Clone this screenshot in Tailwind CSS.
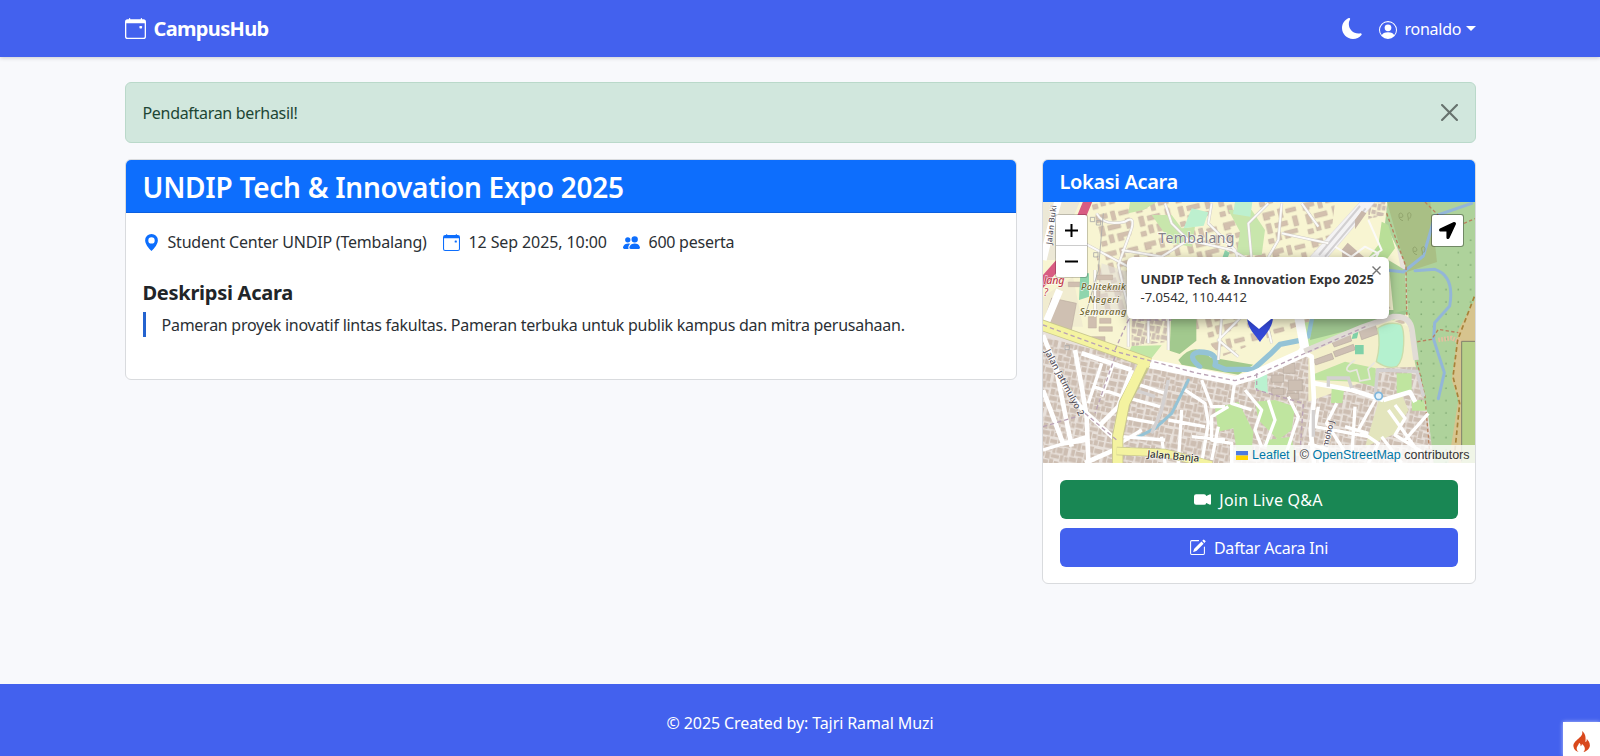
<!DOCTYPE html>
<html lang="id">
<head>
<meta charset="utf-8">
<title>CampusHub</title>
<script src="https://cdn.jsdelivr.net/npm/@tailwindcss/browser@4"></script>
</head>
<body class="flex h-[756px] flex-col overflow-hidden bg-[#f8f9fc] font-['Noto_Sans',sans-serif] text-[16px] leading-[25.5px] tracking-[-0.26px] text-[#2b3035]">

<nav class="h-[57px] shrink-0 bg-[#4361ee] text-white shadow-[0_1px_4px_rgba(0,0,0,0.18)]">
  <div class="mx-auto flex h-full w-[1351px] items-center justify-between">
    <a class="flex items-center gap-[8px]">
      <svg class="h-[21px] w-[21px]" viewBox="0 0 16 16" fill="currentColor"><path d="M11 6.5a.5.5 0 0 1 .5-.5h1a.5.5 0 0 1 .5.5v1a.5.5 0 0 1-.5.5h-1a.5.5 0 0 1-.5-.5z"/><path d="M3.5 0a.5.5 0 0 1 .5.5V1h8V.5a.5.5 0 0 1 1 0V1h1a2 2 0 0 1 2 2v11a2 2 0 0 1-2 2H2a2 2 0 0 1-2-2V3a2 2 0 0 1 2-2h1V.5a.5.5 0 0 1 .5-.5M1 4v10a1 1 0 0 0 1 1h12a1 1 0 0 0 1-1V4z"/></svg>
      <span class="pt-px text-[20px] font-bold tracking-[-0.65px]">CampusHub</span>
    </a>
    <div class="flex items-center">
      <svg class="mr-[16px] h-[21px] w-[21px]" viewBox="0 0 16 16" fill="currentColor"><path d="M6 .278a.77.77 0 0 1 .08.858 7.2 7.2 0 0 0-.878 3.46c0 4.021 3.278 7.277 7.318 7.277q.792-.001 1.533-.16a.79.79 0 0 1 .81.316.73.73 0 0 1-.031.893A8.35 8.35 0 0 1 8.344 16C3.734 16 0 12.286 0 7.71 0 4.266 2.114 1.312 5.124.06A.75.75 0 0 1 6 .278"/></svg>
      <svg class="mr-[8px] mt-[2px] h-[18px] w-[18px]" viewBox="0 0 16 16" fill="currentColor"><path d="M11 6a3 3 0 1 1-6 0 3 3 0 0 1 6 0"/><path fill-rule="evenodd" d="M0 8a8 8 0 1 1 16 0A8 8 0 0 1 0 8m8-7a7 7 0 0 0-5.468 11.37C3.242 11.226 4.805 10 8 10s4.757 1.225 5.468 2.37A7 7 0 0 0 8 1"/></svg>
      <span class="w-[57px] whitespace-nowrap pt-[2px]">ronaldo</span>
      <span class="ml-[4px] border-x-[5px] border-t-[5px] border-x-transparent border-t-white"></span>
    </div>
  </div>
</nav>

<main class="mx-auto flex w-[1351px] flex-1 flex-col pt-[25px]">
  <div class="flex h-[61px] items-center justify-between rounded-[6px] border border-[#bad9ca] bg-[#d1e7dd] px-[17px] text-[#1d4634]">
    <span class="pt-[2px] tracking-[-0.31px]">Pendaftaran berhasil!</span>
    <svg class="h-[17px] w-[17px] opacity-50" viewBox="0 0 16 16" fill="#000"><path d="M.293.293a1 1 0 0 1 1.414 0L8 6.586 14.293.293a1 1 0 1 1 1.414 1.414L9.414 8l6.293 6.293a1 1 0 0 1-1.414 1.414L8 9.414l-6.293 6.293a1 1 0 0 1-1.414-1.414L6.586 8 .293 1.707a1 1 0 0 1 0-1.414"/></svg>
  </div>

  <div class="mt-[16px] flex items-start justify-between">
    <section class="h-[221px] w-[892px] overflow-hidden rounded-[6px] border border-[#d9dbde] bg-white">
      <div class="flex h-[53px] items-center border-b border-[#0b5fe0] bg-[#0d6efd] px-[17px] pt-[3px] text-white">
        <h1 class="text-[28px] font-semibold tracking-[-0.26px]">UNDIP Tech &amp; Innovation Expo 2025</h1>
      </div>
      <div class="px-[17px] pt-[17px]">
        <div class="flex items-center whitespace-nowrap">
          <svg class="mr-[8px] h-[17px] w-[17px] text-[#0d6efd]" viewBox="0 0 16 16" fill="currentColor"><path d="M8 16s6-5.686 6-10A6 6 0 0 0 2 6c0 4.314 6 10 6 10m0-7a3 3 0 1 1 0-6 3 3 0 0 1 0 6"/></svg>
          <span class="w-[275px] tracking-[-0.2px]">Student Center UNDIP (Tembalang)</span>
          <svg class="mr-[9px] h-[17px] w-[17px] text-[#0d6efd]" viewBox="0 0 16 16" fill="currentColor"><path d="M11 6.5a.5.5 0 0 1 .5-.5h1a.5.5 0 0 1 .5.5v1a.5.5 0 0 1-.5.5h-1a.5.5 0 0 1-.5-.5z"/><path d="M3.5 0a.5.5 0 0 1 .5.5V1h8V.5a.5.5 0 0 1 1 0V1h1a2 2 0 0 1 2 2v11a2 2 0 0 1-2 2H2a2 2 0 0 1-2-2V3a2 2 0 0 1 2-2h1V.5a.5.5 0 0 1 .5-.5M1 4v10a1 1 0 0 0 1 1h12a1 1 0 0 0 1-1V4z"/></svg>
          <span class="w-[154px] tracking-[-0.1px]">12 Sep 2025, 10:00</span>
          <svg class="mr-[9px] h-[17px] w-[17px] text-[#0d6efd]" viewBox="0 0 16 16" fill="currentColor"><path d="M7 14s-1 0-1-1 1-4 5-4 5 3 5 4-1 1-1 1zm4-6a3 3 0 1 0 0-6 3 3 0 0 0 0 6m-5.784 6A2.24 2.24 0 0 1 5 13c0-1.355.68-2.75 1.936-3.72A6.3 6.3 0 0 0 5 9c-4 0-5 3-5 4s1 1 1 1zM4.5 8a2.5 2.5 0 1 0 0-5 2.5 2.5 0 0 0 0 5"/></svg>
          <span class="tracking-[-0.25px]">600 peserta</span>
        </div>
        <h2 class="mt-[24px] text-[20px] font-bold tracking-[-0.27px] text-[#212529]">Deskripsi Acara</h2>
        <p class="mt-[7px] h-[25px] border-l-[3px] border-[#2463cf] pl-[16px] pt-px">Pameran proyek inovatif lintas fakultas. Pameran terbuka untuk publik kampus dan mitra perusahaan.</p>
      </div>
    </section>

    <section class="h-[425px] w-[434px] overflow-hidden rounded-[6px] border border-[#d9dbde] bg-white">
      <div class="flex h-[42px] items-center bg-[#0d6efd] px-[17px] pt-[2px] text-white">
        <h2 class="text-[20px] font-semibold tracking-[-0.35px]">Lokasi Acara</h2>
      </div>
      <div class="relative h-[261px] overflow-hidden">
        <svg class="h-full w-full" viewBox="24 156 1296 783" preserveAspectRatio="none" font-family="Noto Sans, sans-serif">
          <defs>
            <pattern id="houses" width="97" height="104" patternUnits="userSpaceOnUse" patternTransform="rotate(12)">
              <path fill="#cdbeb2" d="M2 3h15v16H2zM19 1h10v22H19zM32 5h21v12H32zM56 2h12v20H56zM71 6h23v14H71zM4 23h11v20H4zM18 27h24v13H18zM45 20h9v25h-9zM57 26h18v17H57zM78 24h13v22H78zM1 47h22v14H1zM26 44h14v21H26zM43 49h25v11H43zM71 47h10v20H71zM84 50h11v14H84zM3 65h13v18H3zM19 69h19v12H19zM41 64h12v22H41zM56 68h13v13H56zM72 71h21v12H72zM2 87h24v13H2zM29 85h10v17H29zM42 89h19v12H42zM64 85h12v16H64zM79 87h15v14H79z"/>
            </pattern>
            <pattern id="blocks" width="122" height="114" patternUnits="userSpaceOnUse" patternTransform="rotate(-14)">
              <path fill="#d3c0ae" stroke="#bfae9e" stroke-width="1.5" d="M6 8h34v14H24v8H6zM52 6h12v28H52zM76 12h30v12H76zM8 42h14v30H8zM34 46h38v14H34zM90 38h14v30H90zM30 74h14v24H30zM56 76h40v12H72v10H56zM4 88h16v14H4z"/>
            </pattern>
            <pattern id="orchard" width="37" height="37" patternUnits="userSpaceOnUse"><circle cx="12" cy="12" r="2.4" fill="#7fa873"/></pattern>
          </defs>
          <!-- land use -->
          <path fill="#e8e1db" d="M24 156h1296v783H24z"/>
          <path fill="url(#houses)" d="M24 560L340 640 600 700 1000 520 1150 650 1200 939H24z"/>
          <path fill="#f8f5d2" d="M24 156H1060L1120 480 1150 650 980 530 820 590 600 690 330 630 24 540z"/>
          <path fill="url(#blocks)" d="M170 156H900L860 500 560 620 430 480 200 480zM1000 470h110v60h-110z"/>
          <path fill="#e4dfd8" d="M200 340l90 30v120H180zM24 156h110L60 330H24z" opacity=".6"/>
          <path fill="#f1ecd0" d="M24 440l90-60 30 150-120 0z"/>
          <path fill="#cfc0b2" stroke="#bbaca0" stroke-width="2" d="M50 444l74 16-16 86-84-20z"/>
          <path fill="#d0bfb0" stroke="#bfae9f" stroke-width="1.5" d="M185 375h48v14h-48zM175 415h20v30h-20zM210 410h44v14h-44zM160 500h24v34h-24zM194 505h34v15h-34zM192 530h40v14h-40zM170 560h40v16h-40zM100 396h36v14h-36z"/>
          <path fill="url(#houses)" d="M290 505h110v70l-110 14zM1000 156h90l-36 40-54 10z"/>
          <path fill="#c8e6ac" d="M285 156h80l-40 24-45 10zM350 195h60l30 40 40-5-10 60-60-10zM580 180h70l40 60-10 75h-75l10-70zM660 400l40 40 5 60h-20z"/>
          <path fill="#bdf0cf" d="M470 175l50 12-14 40-60 8zM600 156h52l-6 44-52-8z"/>
          <path fill="#8fd5ad" d="M136 370h26v70l-30 10zM570 300l14 8-10 26-14-4zM845 300l16 6-10 18h-10z"/>
          <path fill="#a2c98e" d="M408 500l76 8v64l-50 40-30-10zM430 630q50-60 95-8l130 22-45 30-170-30z"/>
          <path fill="#c2e6a6" d="M290 588l90-2-30 38-70-14zM800 520l160-30 140-10-20 30-260 80z"/>
          <path fill="#9fc690" d="M835 480h290v10l-180 50-120 30z"/>
          <!-- river -->
          <g fill="none" stroke="#94c3d6" stroke-linejoin="round" stroke-linecap="round">
            <path stroke-width="16" d="M494 650q-42-36-2-44 60 0 48 40l30 12 85 0 50-45 30-30 60-12"/>
            <path stroke-width="13" d="M820 560l12-60"/>
            <path stroke-width="9" d="M460 690l-20 40-30 60-50 45-55 28"/>
          </g>
          <!-- school fields -->
          <path fill="#f3efcb" d="M820 610l170-80 80-20 75 30v110l-120 5-40 40-165 60z"/>
          <path fill="#bfe3a0" d="M830 675l100-40 92 20v55l-60-15-125-5z"/>
          <path fill="#cdbfb3" stroke="#b8aaa0" stroke-width="2" d="M970 535l48-18 12 34-50 18zM890 575l55-20 5 18-52 18zM895 605l60-22 6 16-60 22zM835 630l55-20 6 17-54 18zM745 640h35v30h-35zM760 690h42v32h-42zM710 675h36v22h-36zM710 715h36v20h-36zM756 730h36v18h-36z"/>
          <path fill="#7fd1a8" d="M960 585h26v28h-26zM955 548l16-5-5 22-16 2z"/>
          <path fill="#b4f1cf" stroke="#c9dcaa" stroke-width="4" d="M1028 535q30-22 68-12 12 10 10 60-2 50-20 66-28 10-62-14 14-50 4-100z"/>
          <path fill="none" stroke="#e8e6df" stroke-width="5" d="M960 630q-40 30-15 35l20-6 10 34 30-6-6-30 20-20"/>
          <path fill="#baf2d0" d="M660 675l36-16 2 70-38-14z"/>
          <path fill="#e3e5bd" d="M1030 755l70-24 20 50-40 70-90 40z"/>
          <!-- parks -->
          <path fill="#bfe59f" d="M540 775l70-20 20 40 25 50-5 60h-45l-10-70-45 10zM660 755l60-5 60 20-10 70-40 30-60-60zM690 870l80-10 10 60h-80zM890 715h38l-6 44h-34zM1085 670h45v60h-45zM1130 750h35l10 32h-44z"/>
          <!-- forest -->
          <path fill="#aed29b" d="M1058 156H1320V939H1196L1180 800 1140 640 1118 480 1110 340 1050 220z"/>
          <path fill="#a9bf85" d="M1056 156h130l20 180-90 30z"/>
          <path fill="#acd096" d="M1060 330l50 30 6 120-40 10z"/>
          <path fill="url(#orchard)" d="M1080 400l60 30 180-180V939h-120l-60-260-20-200z"/>
          <path fill="#d7c48e" d="M1320 450l-50 90-20 150 20 60-30 190h80z"/>
          <path fill="#b5cf87" d="M1279 576h41v363h-41z"/>
          <path fill="none" stroke="#e5bfa0" stroke-width="14" stroke-dasharray="5 4" d="M1210 570l40-6 30 14"/>
          <path fill="none" stroke="#93b6d8" stroke-width="9" stroke-linecap="round" stroke-linejoin="round" d="M1310 160l-110 38-35 120-60 48-50-6M1140 362l60-4q60 20 44 110l-45 50-3 50 32 100-18 78"/>
          <path fill="none" stroke="#b9805e" stroke-width="4" stroke-dasharray="10 7" d="M1055 190l58 160 2 140 30 140 25 110 15 180M1170 156l80 80 70-30M1130 578l60-10 20-30 60 10"/>
          <path fill="none" stroke="#a88138" stroke-width="5" stroke-dasharray="14 9" d="M1318 440l-50 130-14 110 20 80-17 170"/>
          <path fill="none" stroke="#80806c" stroke-width="3" d="M1320 574h-40v360"/>
          <!-- trunk road -->
          <path fill="none" stroke="#d85c82" stroke-width="26" d="M10 410L90 320 160 150"/>
          <path fill="none" stroke="#fff" stroke-width="22" d="M24 330l24-100 22-80M24 540l50-120"/>
          <!-- wide campus boulevard -->
          <path fill="#f4f3f4" stroke="#dedbdc" stroke-width="2" d="M975 156h45l-145 170h-55z"/>
          <path fill="none" stroke="#d2d0d2" stroke-width="6" d="M992 175L870 320M975 168L852 315"/>
          <path fill="#c8b7aa" d="M920 300l18-22 50 44h-66zM960 210l20-28 14 8-34 48z"/>
          <path fill="#b9df98" d="M1040 215l20 10 20 70-30 40h-60l40-50z"/>
          <!-- campus lanes -->
          <g fill="none" stroke-linejoin="round">
            <path stroke="#d0ccc6" stroke-width="9" d="M185 190q20 40 85 25 30-20 20 20l-40 110 30 130M260 300l120 20 80-50 130 30 70 40M390 160l20 60 60 60M530 160l-10 60 80 80 50 150M650 330l-10-110 60-60M740 160l-10 110-70 120M740 250l140 30M800 160l50 70M130 270l150 80 60 10M180 360v140M560 500l-10 130M620 500l-70 70 60 50M690 500l20 80M280 500v90M340 500v80M400 500v100"/>
            <path stroke="#fbfaf8" stroke-width="6" d="M185 190q20 40 85 25 30-20 20 20l-40 110 30 130M260 300l120 20 80-50 130 30 70 40M390 160l20 60 60 60M530 160l-10 60 80 80 50 150M650 330l-10-110 60-60M740 160l-10 110-70 120M740 250l140 30M800 160l50 70M130 270l150 80 60 10M180 360v140M560 500l-10 130M620 500l-70 70 60 50M690 500l20 80M280 500v90M340 500v80M400 500v100M900 290l80 50 60-40-40-90M950 320l40-30 40 20-20 40-40-20"/>
          </g>
          <!-- residential streets -->
          <g fill="none" stroke="#fff" stroke-linejoin="round">
            <path stroke-width="14" d="M24 555l60 150 60 75 105 95M120 600l20 110 15 90 5 135M140 610l150 50M290 660l-40 110-60 60M24 720l60 160 70-10M60 640l50 250M150 939l90-40M790 600l40 20 7 130-10 90 10 100M840 700l110 20 95 30M1045 750l80-24 16 30"/>
            <path stroke-width="10" d="M240 890l80-50"/>
            <path stroke-width="10" d="M200 640l-40 120M175 710l90 30M235 640l-35 100M265 740l110 30M255 800l110 20M300 700l90 30M260 860l130 10M380 860l10 80M450 720l60 40 10 60-20 120M400 810l110 20M500 690l30 80 40 0M600 690l-10 70 60 20M440 780l-10 160M470 860l100 10M550 830l-20 100M580 770l-50 30v70l60 10v60M630 720l50 60 -20 60 20 50M700 750l20 60-30 80M24 900l130-40M760 740l30 60-40 120M850 770l-10 60 160 30M880 840l-25 99M905 760l-30 60 70 110M960 770l-10 160M1020 750l-50 90 60 40-30 60M1080 765l30 40-30 50 80 50M1060 780l100 140M1110 870l70-80M1040 860l60 79M930 830l70 20M820 880l60 20"/>
          </g>
          <path fill="none" stroke="#d4d1d1" stroke-width="10" d="M400 690l-20 90-30 70M300 720l60 20M835 780v80M1020 740l8-80 118 4 20 76M880 710v-26h60l10 30"/>
          <!-- main road -->
          <path fill="none" stroke="#fff" stroke-width="28" stroke-linejoin="round" d="M320 636L480 668 600 692 660 674 810 606M788 480l24 130"/>
          <path fill="none" stroke="#e1dcd6" stroke-width="17" d="M808 604L980 532 1075 500q50-4 56 40l12 90"/>
          <path fill="none" stroke="#c8c78e" stroke-width="34" stroke-linejoin="round" d="M10 522L240 602 345 640M330 640L268 760 248 860 248 939"/>
          <path fill="none" stroke="#f4f3a0" stroke-width="29" stroke-linejoin="round" d="M10 522L240 602 345 640M330 630L268 760 248 860 248 939"/>
          <path fill="none" stroke="#c8c78e" stroke-width="25" d="M245 903l145 6 140 36"/>
          <path fill="none" stroke="#f4f3a0" stroke-width="21" d="M245 903l145 6 140 36"/>
          <path fill="none" stroke="#b9a2b5" stroke-width="4" stroke-dasharray="13 9" d="M24 525L240 604 480 668 600 692 660 676 1000 526M150 790l95 80M240 600l40-90 130 0M24 830l100-30M665 670v50l140 40-10 150M240 620l-60 170"/>
          <path fill="none" stroke="#aaa" stroke-width="2.5" d="M205 190l-15 170-40 140M166 202h13v13h-13zM184 212h13v13h-13zM176 308h13v13h-13zM90 586h13v13H90z"/>
          <circle cx="1031" cy="738" r="11" fill="#e5f1f8" stroke="#7db6dd" stroke-width="5"/>
          <!-- labels -->
          <g stroke="#fff" stroke-opacity=".7" stroke-width="4" paint-order="stroke">
            <text x="370" y="280" font-size="42" fill="#85818a" textLength="228">Tembalang</text>
            <g font-size="28" font-style="italic" font-weight="500" fill="#70652e">
              <text x="138" y="420" textLength="134">Politeknik</text><text x="160" y="458" textLength="92">Negeri</text><text x="134" y="495" textLength="140">Semarang</text>
            </g>
            <text x="26" y="402" font-size="32" font-style="italic" font-weight="500" fill="#c23c4c" textLength="62">lang</text>
            <text x="26" y="438" font-size="30" font-style="italic" fill="#c23c4c">?</text>
            <text transform="translate(50 284) rotate(-83)" font-size="24" font-weight="500" fill="#55505a" textLength="118">Jalan Buki</text>
            <text transform="translate(28 604) rotate(62)" font-size="28" font-weight="500" fill="#55505a" textLength="222">Jalan Jatimulyo 2</text>
            <text transform="translate(336 922) rotate(5)" font-size="30" font-weight="500" fill="#333" textLength="156">Jalan Banja</text>
            <text transform="translate(878 893) rotate(-76)" font-size="25" font-weight="500" fill="#55505a">moho J</text>
          </g>
          <path fill="none" stroke="#92a56e" stroke-width="3" d="M1104 212q-14-2-12-20 8-8 12 6 0 6-10 4M1120 212v-8q-6-16 4-16 8 4 0 18M1146 314q-14-2-12-20 8-8 12 6 0 6-10 4M1162 314v-8q-6-16 4-16 8 4 0 18"/>
        </svg>

        <!-- marker -->
        <svg class="absolute left-[203px] top-[99px] h-[42px] w-[28px]" viewBox="0 0 28 42"><path fill="#3348d6" d="M14 41C10 35 1 27 1 16a13 13 0 0 1 26 0c0 11-9 19-13 25"/><circle cx="14" cy="15" r="6" fill="#c9cdb8"/></svg>

        <!-- zoom control -->
        <div class="absolute left-[12px] top-[12px] flex w-[33px] flex-col overflow-hidden rounded-[3px] border border-black/20 bg-white bg-clip-padding">
          <span class="flex h-[31px] items-center justify-center border-b border-[#ccc]"><svg class="h-[13px] w-[13px]" viewBox="0 0 13 13"><path d="M6.5 0v13M0 6.5h13" stroke="#000" stroke-width="2"/></svg></span>
          <span class="flex h-[31px] items-center justify-center"><svg class="h-[13px] w-[13px]" viewBox="0 0 13 13"><path d="M0 6.5h13" stroke="#000" stroke-width="2"/></svg></span>
        </div>
        <!-- locate control -->
        <div class="absolute left-[388px] top-[12px] flex h-[33px] w-[33px] items-center justify-center rounded-[3px] border border-black/35 bg-white bg-clip-padding">
          <svg class="h-[17px] w-[17px]" viewBox="0 0 512 512"><path d="M444.52 3.52L28.74 195.42c-47.97 22.39-31.98 92.75 19.19 92.75h175.91v175.91c0 51.17 70.36 67.17 92.75 19.19l191.9-415.78c15.99-38.39-25.59-79.97-63.97-63.97z"/></svg>
        </div>

        <!-- popup -->
        <div class="absolute left-[84px] top-[55px] h-[62px] w-[262px] rounded-[6px] bg-white shadow-[0_3px_12px_rgba(0,0,0,0.35)]">
          <div class="pl-[14px] pt-[13px] text-[13px] leading-[18px] whitespace-nowrap text-[#333]">
            <div class="font-bold tracking-[0.07px]">UNDIP Tech &amp; Innovation Expo 2025</div>
            <div class="tracking-[-0.05px]">-7.0542, 110.4412</div>
          </div>
          <svg class="absolute right-[8px] top-[9px] h-[9px] w-[9px]" viewBox="0 0 9 9"><path d="M.5.5l8 8M8.5.5l-8 8" stroke="#757575" stroke-width="1.4"/></svg>
          <svg class="absolute left-[120px] top-[62px] h-[10px] w-[24px]" viewBox="0 0 24 10"><path d="M0 0h24L12 10z" fill="#fff"/></svg>
        </div>

        <!-- attribution -->
        <div class="absolute bottom-0 right-0 flex h-[18px] items-center whitespace-nowrap bg-white/80 px-[5px] pt-[2px] font-['Liberation_Sans',sans-serif] text-[12.5px] leading-[16px] tracking-normal text-[#333]">
          <svg class="mr-[4px] h-[9px] w-[12px]" viewBox="0 0 12 8" preserveAspectRatio="none"><path fill="#4C7BE1" d="M0 0h12v4H0z"/><path fill="#FFD500" d="M0 4h12v4H0z"/></svg>
          <span><a class="text-[#0078a8]">Leaflet</a> | © <a class="text-[#0078a8]">OpenStreetMap</a> contributors</span>
        </div>
      </div>
      <div class="flex flex-col gap-[9px] px-[17px] pt-[17px] text-white">
        <a class="flex h-[39px] items-center justify-center gap-[8px] rounded-[6px] bg-[#198754]">
          <svg class="h-[17px] w-[17px]" viewBox="0 0 16 16" fill="currentColor"><path d="M0 5a2 2 0 0 1 2-2h7.5a2 2 0 0 1 1.983 1.738l3.11-1.382A1 1 0 0 1 16 4.269v7.462a1 1 0 0 1-1.406.913l-3.111-1.382A2 2 0 0 1 9.5 13H2a2 2 0 0 1-2-2z"/></svg>
          <span class="pt-[2px] tracking-[0.22px]">Join Live Q&amp;A</span>
        </a>
        <a class="flex h-[39px] items-center justify-center gap-[8px] rounded-[6px] bg-[#4361ee]">
          <svg class="h-[17px] w-[17px]" viewBox="0 0 16 16" fill="currentColor"><path d="M15.502 1.94a.5.5 0 0 1 0 .706L14.459 3.69l-2-2L13.502.646a.5.5 0 0 1 .707 0l1.293 1.293zm-1.75 2.456-2-2L4.939 9.21a.5.5 0 0 0-.121.196l-.805 2.414a.25.25 0 0 0 .316.316l2.414-.805a.5.5 0 0 0 .196-.12l6.813-6.814z"/><path fill-rule="evenodd" d="M1 13.5A1.5 1.5 0 0 0 2.5 15h11a1.5 1.5 0 0 0 1.5-1.5v-6a.5.5 0 0 0-1 0v6a.5.5 0 0 1-.5.5h-11a.5.5 0 0 1-.5-.5v-11a.5.5 0 0 1 .5-.5H9a.5.5 0 0 0 0-1H2.5A1.5 1.5 0 0 0 1 2.5z"/></svg>
          <span class="pt-[2px] tracking-[-0.2px]">Daftar Acara Ini</span>
        </a>
      </div>
    </section>
  </div>
</main>

<footer class="flex h-[72px] shrink-0 items-center justify-center bg-[#4361ee] pt-[7px] text-white">
  <span class="tracking-[-0.1px]">© 2025 Created by: Tajri Ramal Muzi</span>
</footer>

<!-- debug toolbar toggle -->
<div class="absolute bottom-0 right-0 flex h-[34px] w-[37px] items-center justify-center bg-white pt-[4px] shadow-[0_0_4px_rgba(255,255,255,0.6)]">
  <svg class="h-[21px] w-[17px]" viewBox="0 0 16 20"><path fill="#d9481c" d="M8.5 0c1 3.5-1 5-3.5 7.3C2.5 9.5 0 11.5.3 14.5.6 17.6 3 19.5 5.2 20c-1.9-1.6-2.4-3.7-1.1-5.5.8-1.1 1.5-1.8 1.5-3.2 1.4.8 1.8 2 1.5 3.2.9-.3 1.3-1.2 1.3-2.1 2.8 2 3.9 5.3 1.5 7.6 3.5-.9 6-3.4 6.1-6.5 0-2.8-1.7-4.4-3-6.2.2 1.7-.3 2.8-1.3 3.2C12.4 6.2 11.6 2 8.5 0"/></svg>
</div>
</body>
</html>
